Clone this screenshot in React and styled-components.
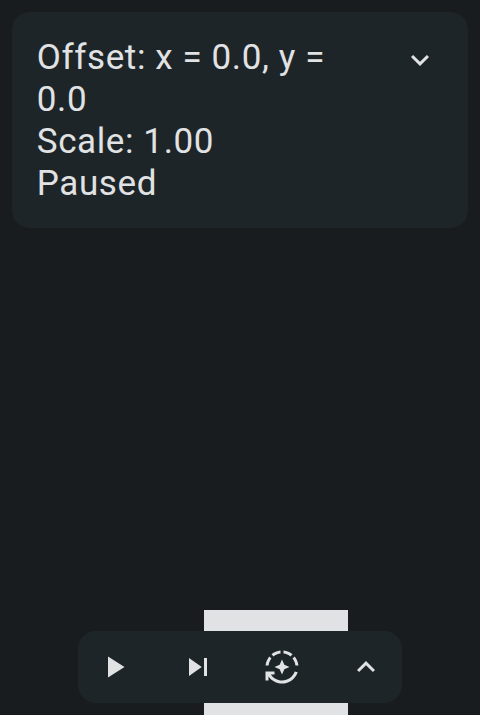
import React from "react";
import styled, { createGlobalStyle } from "styled-components";

const GlobalStyle = createGlobalStyle`
  * { box-sizing: border-box; }
  body { margin: 0; background: #191c1e; }
`;

const Screen = styled.main`
  position: relative;
  display: flex;
  flex-direction: column;
  justify-content: space-between;
  height: 100vh;
  padding: 12px;
  overflow: hidden;
  background: #191c1e;
  color: #e1e2e4;
  font-family: Roboto, sans-serif;
`;

/* A live cell on the free canvas, drawn beneath the panels. */
const Cell = styled.div`
  position: absolute;
  left: 204px;
  top: 610px;
  width: 144px;
  height: 144px;
  background: #e1e2e4;
`;

const InfoPanel = styled.section`
  position: relative;
  display: flex;
  align-items: flex-start;
  padding: 12px;
  border-radius: 18px;
  background: #1e2528;
`;

const Status = styled.div`
  flex: 1;
  padding: 13px 0 11px 12.8px;
  font-size: 35px;
  line-height: 42px;
  letter-spacing: 0.6px;
`;

const Line = styled.p`
  margin: 0;
`;

const IconButton = styled.button`
  display: flex;
  align-items: center;
  justify-content: center;
  width: 72px;
  height: 72px;
  padding: 0;
  border: 0;
  background: none;
  color: inherit;
`;

const Toolbar = styled.nav`
  position: relative;
  display: flex;
  gap: 12px;
  align-self: center;
  border-radius: 18px;
  background: #1e2528;
`;

const Glyph = styled.svg`
  display: block;
  width: 36px;
  height: 36px;
  fill: currentColor;
`;

const icons = {
  expand: "M16.59 8.59 12 13.17 7.41 8.59 6 10l6 6 6-6z",
  collapse: "M12 8l-6 6 1.41 1.41L12 10.83l4.59 4.58L18 14z",
  play: "M8 5v14l11-7z",
  step: "M6 18l8.5-6L6 6v12zM16 6v12h2V6h-2z",
  auto: "M19.03 3.56c-1.67-1.39-3.74-2.3-6.03-2.51v2.01c1.73.19 3.31.88 4.61 1.92l1.42-1.42zM11 3.06V1.05c-2.29.2-4.36 1.12-6.03 2.51l1.42 1.42C7.69 3.94 9.27 3.25 11 3.06zM4.98 6.39 3.56 4.97C2.17 6.64 1.26 8.71 1.05 11h2.01c.19-1.73.88-3.31 1.92-4.61zM20.94 11h2.01c-.21-2.29-1.12-4.36-2.51-6.03l-1.42 1.42c1.04 1.3 1.73 2.88 1.92 4.61zM7 12l3.44 1.56L12 17l1.56-3.44L17 12l-3.44-1.56L12 7l-1.56 3.44zM12 21c-3.11 0-5.85-1.59-7.46-4H7v-2H1v6h2v-2.7c1.99 2.84 5.27 4.7 9 4.7 4.87 0 9-3.17 10.44-7.56l-1.96-.45C19.25 18.48 15.92 21 12 21z",
};

function Action({ icon, label }) {
  return (
    <IconButton aria-label={label}>
      <Glyph viewBox="0 0 24 24">
        <path d={icons[icon]} />
      </Glyph>
    </IconButton>
  );
}

export default function App() {
  return (
    <>
      <GlobalStyle />
      <Screen>
        <Cell />
        <InfoPanel>
          <Status>
            <Line>Offset: x = 0.0, y = 0.0</Line>
            <Line>Scale: 1.00</Line>
            <Line>Paused</Line>
          </Status>
          <Action icon="expand" label="Collapse status" />
        </InfoPanel>
        <Toolbar>
          <Action icon="play" label="Play" />
          <Action icon="step" label="Step" />
          <Action icon="auto" label="Auto fit" />
          <Action icon="collapse" label="Expand controls" />
        </Toolbar>
      </Screen>
    </>
  );
}
